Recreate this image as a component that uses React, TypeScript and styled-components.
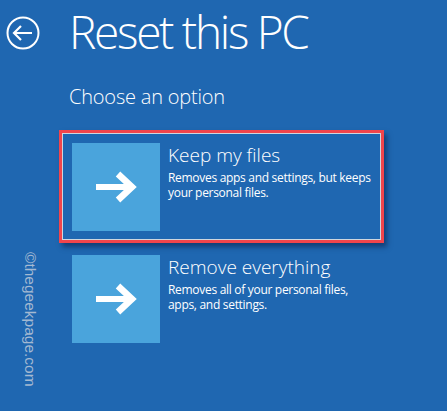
import React from 'react'
import styled, { createGlobalStyle } from 'styled-components'

const GlobalStyle = createGlobalStyle`
  html, body {
    margin: 0;
    padding: 0;
    background: #1f67b1;
  }
  body {
    font-family: "Open Sans", "Liberation Sans", sans-serif;
    color: #ffffff;
  }
`

const options = [
  {
    title: 'Keep my files',
    text: 'Removes apps and settings, but keeps your personal files.',
    selected: true,
  },
  {
    title: 'Remove everything',
    text: 'Removes all of your personal files, apps, and settings.',
    selected: false,
  },
]

const BackIcon = () => (
  <svg width="34" height="34" viewBox="0 0 34 34">
    <circle cx="17" cy="17" r="15.5" fill="none" stroke="#fff" strokeWidth="2" />
    <path d="M8 17 H26 M15 10 L8 17 L15 24" fill="none" stroke="#fff" strokeWidth="2.2" />
  </svg>
)

const ArrowIcon = () => (
  <svg width="44" height="34" viewBox="0 0 44 34">
    <path d="M1 17 H36" stroke="#fff" strokeWidth="6" />
    <path d="M23 4 L37 17 L23 30" fill="none" stroke="#fff" strokeWidth="6.5" strokeLinejoin="miter" />
  </svg>
)

const App = () => {
  return (
    <Page>
      <GlobalStyle />
      <Header>
        <BackButton>
          <BackIcon />
        </BackButton>
        <Title>Reset this PC</Title>
      </Header>
      <Subtitle>Choose an option</Subtitle>
      <OptionList>
        {options.map((o) => (
          <Option key={o.title} selected={o.selected}>
            <Tile>
              <ArrowIcon />
            </Tile>
            <OptionText>
              <OptionTitle>{o.title}</OptionTitle>
              <OptionDesc>{o.text}</OptionDesc>
            </OptionText>
          </Option>
        ))}
      </OptionList>
      <Watermark>©thegeekpage.com</Watermark>
    </Page>
  )
}

export default App

const Page = styled.div`
  position: relative;
  width: 447px;
  height: 411px;
  overflow: hidden;
  background: #1f67b1;
`

const Header = styled.div`
  display: flex;
  align-items: flex-start;
  padding: 0 0 0 6px;
  height: 76px;
`

const BackButton = styled.div`
  width: 34px;
  height: 34px;
  margin-top: 16px;
  margin-right: 29px;
`

const Title = styled.h1`
  margin: 0;
  font-weight: 300;
  font-size: 46px;
  line-height: 46px;
  margin-top: 8px;
  letter-spacing: -2.3px;
  white-space: nowrap;
`

const Subtitle = styled.div`
  font-size: 20px;
  font-weight: 300;
  line-height: 24px;
  letter-spacing: -0.2px;
  padding-left: 69px;
  margin-top: 9px;
`

const OptionList = styled.div`
  display: flex;
  flex-direction: column;
  padding-left: 59px;
  margin-top: 21px;
`

const Option = styled.div<{ selected?: boolean }>`
  display: flex;
  align-items: flex-start;
  gap: 8px;
  box-sizing: border-box;
  width: 325px;
  height: 113px;
  padding: 9px;
  border: 3px solid ${(p) => (p.selected ? '#f2454c' : 'transparent')};
  outline: 1px solid ${(p) => (p.selected ? '#cfd6de' : 'transparent')};
  outline-offset: -4px;
  box-shadow: ${(p) => (p.selected ? '3px 4px 5px rgba(10, 30, 70, 0.55)' : 'none')};
  & + & {
    margin-top: -1px;
  }
`

const Tile = styled.div`
  flex: 0 0 88px;
  height: 88px;
  margin-left: 1px;
  margin-top: 1px;
  background: #4aa4dc;
  display: flex;
  align-items: center;
  justify-content: center;
  padding-left: 2px;
  box-sizing: border-box;
`

const OptionText = styled.div`
  display: flex;
  flex-direction: column;
  padding-top: 1px;
`

const OptionTitle = styled.div`
  font-size: 19px;
  font-weight: 300;
  line-height: 24px;
  white-space: nowrap;
`

const OptionDesc = styled.div`
  font-size: 12px;
  line-height: 15px;
  letter-spacing: -0.3px;
  margin-top: 3px;
  width: 205px;
`

const Watermark = styled.div`
  position: absolute;
  left: 39px;
  top: 252px;
  transform-origin: 0 0;
  transform: rotate(90deg);
  font-family: "Liberation Sans", Arial, sans-serif;
  font-size: 15.5px;
  color: #a4b9d2;
  white-space: nowrap;
`
